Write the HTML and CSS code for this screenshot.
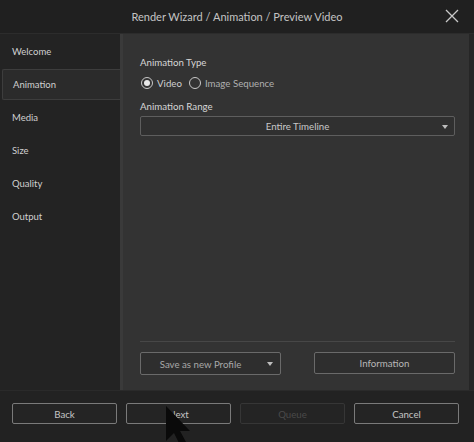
FILE: index.html
```html
<!DOCTYPE html>
<html>
<head>
<meta charset="utf-8">
<link rel="stylesheet" href="styles.css">
</head>
<body>
<div class="window">
  <div class="titlebar">
    <span class="title">Render Wizard / Animation / Preview Video</span>
    <svg class="close" width="14" height="14" viewBox="0 0 14 14"><path d="M1 1L13 13M13 1L1 13" stroke="#c8c8c8" stroke-width="1.3" fill="none"/></svg>
  </div>
  <div class="main">
    <nav class="sidebar">
      <div class="nav-item">Welcome</div>
      <div class="nav-item active">Animation</div>
      <div class="nav-item">Media</div>
      <div class="nav-item">Size</div>
      <div class="nav-item">Quality</div>
      <div class="nav-item">Output</div>
    </nav>
    <section class="panel">
      <div class="form">
        <div class="label">Animation Type</div>
        <div class="radios">
          <span class="radio checked"></span><span class="radio-text">Video</span>
          <span class="radio"></span><span class="radio-text dim">Image Sequence</span>
        </div>
        <div class="label range">Animation Range</div>
        <div class="select">
          <span>Entire Timeline</span>
          <span class="caret"></span>
        </div>
      </div>
      <div class="panel-footer">
        <div class="sep"></div>
        <div class="footer-btns">
          <div class="btn split">Save as new Profile<span class="caret"></span></div>
          <div class="btn info">Information</div>
        </div>
      </div>
    </section>
    <div class="edge"></div>
  </div>
  <div class="bottombar">
    <div class="bbtn">Back</div>
    <div class="bbtn">Next</div>
    <div class="bbtn disabled">Queue</div>
    <div class="bbtn">Cancel</div>
    <svg class="cursor" width="26" height="40" viewBox="0 0 26 40"><path d="M1 1L1 36L9 28L15 40L21 37L15 26L25 26Z" fill="#0a0a0a"/></svg>
  </div>
</div>
</body>
</html>
```
FILE: styles.css
```css
html, body {
  margin: 0;
  padding: 0;
  background: #232323;
}
body {
  font-family: Lato, "Noto Sans", sans-serif;
  color: #d2d2d2;
}
.window {
  width: 474px;
  height: 442px;
  display: flex;
  flex-direction: column;
  overflow: hidden;
  position: relative;
}
.titlebar {
  height: 33px;
  flex: none;
  background: #202020;
  border-bottom: 1px solid #2c2c2c;
  display: flex;
  align-items: center;
  justify-content: center;
  position: relative;
}
.title {
  font-size: 11px;
  color: #c4c4c4;
}
.close {
  position: absolute;
  right: 15px;
  top: 9px;
}
.main {
  flex: 1;
  display: flex;
  min-height: 0;
}
.sidebar {
  width: 120px;
  flex: none;
  background: #232323;
  padding-top: 1px;
  box-sizing: border-box;
}
.nav-item {
  height: 33px;
  display: flex;
  align-items: center;
  padding-left: 12px;
  font-size: 9.5px;
  color: #d0d0d0;
  box-sizing: border-box;
}
.nav-item.active {
  margin-left: 2px;
  padding-left: 10px;
  background: #2b2b2b;
  border: 1px solid #3d3d3d;
  border-right: none;
  border-radius: 2px 0 0 2px;
  height: 31px;
  margin-top: 1px;
  margin-bottom: 1px;
}
.panel {
  flex: 1;
  background: #333333;
  border-left: 3px solid #3a3a3a;
  display: flex;
  flex-direction: column;
  justify-content: space-between;
  padding: 0 14px 0 17px;
}
.edge {
  width: 5px;
  flex: none;
  background: #262626;
}
.form {
  padding-top: 20px;
}
.label {
  font-size: 9.7px;
  color: #d6d6d6;
  height: 16px;
  line-height: 16px;
}
.label.range {
  margin-top: 4px;
}
.radios {
  display: flex;
  align-items: center;
  height: 22px;
  margin-top: 2px;
}
.radio {
  width: 10px;
  height: 10px;
  border: 1px solid #c8c8c8;
  border-radius: 50%;
  box-sizing: content-box;
  position: relative;
  margin-left: 1px;
}
.radio.checked::after {
  content: "";
  position: absolute;
  left: 2px;
  top: 2px;
  width: 6px;
  height: 6px;
  border-radius: 50%;
  background: #e8e8e8;
}
.radio-text {
  font-size: 9.7px;
  color: #d0d0d0;
  margin-left: 4px;
  margin-right: 6px;
}
.radio-text.dim {
  color: #b0b0b0;
}
.select {
  margin-top: 2px;
  height: 20px;
  border: 1px solid #5e5e5e;
  border-radius: 2px;
  background: #303030;
  display: flex;
  align-items: center;
  justify-content: center;
  font-size: 9.7px;
  color: #c8c8c8;
  position: relative;
  box-sizing: border-box;
}
.caret {
  width: 0;
  height: 0;
  border-left: 3.5px solid transparent;
  border-right: 3.5px solid transparent;
  border-top: 4px solid #bdbdbd;
}
.select .caret {
  position: absolute;
  right: 6px;
  top: 8px;
}
.panel-footer {
  padding-bottom: 15px;
}
.sep {
  height: 1px;
  background: #474747;
  margin-bottom: 10px;
}
.footer-btns {
  display: flex;
  justify-content: space-between;
}
.btn {
  width: 141px;
  height: 23px;
  box-sizing: border-box;
  border: 1px solid #6a6a6a;
  border-radius: 2px;
  background: #2e2e2e;
  display: flex;
  align-items: center;
  justify-content: center;
  font-size: 9.7px;
  color: #a8a8a8;
  position: relative;
}
.btn.split {
  padding-right: 20px;
}
.btn.split .caret {
  position: absolute;
  right: 7px;
  top: 9px;
}
.btn.info {
  height: 22px;
  color: #b8b8b8;
}
.bottombar {
  height: 52px;
  flex: none;
  background: #222222;
  border-top: 1px solid #2a2a2a;
  box-sizing: border-box;
  display: flex;
  align-items: flex-start;
  gap: 9px;
  padding: 12px 15px 0 12px;
  position: relative;
}
.bbtn {
  flex: 1;
  height: 21px;
  box-sizing: border-box;
  border: 1px solid #7a7a7a;
  border-radius: 2px;
  background: #242424;
  display: flex;
  align-items: center;
  justify-content: center;
  font-size: 9.7px;
  color: #c4c4c4;
}
.bbtn.disabled {
  border-color: #363636;
  color: #4a4a4a;
}
.cursor {
  position: absolute;
  left: 165px;
  top: 14px;
}
```
